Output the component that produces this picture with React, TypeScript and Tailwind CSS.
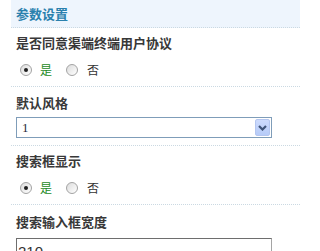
import React from "react";

function Radio({ checked }: { checked?: boolean }) {
  return (
    <span className="relative inline-flex w-[12px] h-[12px] rounded-full border border-[#a3a3a3] bg-gradient-to-br from-[#dcdcdc] to-[#ffffff] items-center justify-center shrink-0">
      {checked && <span className="w-[4px] h-[4px] rounded-full bg-[#1e1e1e]" />}
    </span>
  );
}

function RadioRow() {
  return (
    <div className="mt-[7px] h-[20px] flex items-center pl-[4px] text-[12px] leading-none">
      <Radio checked />
      <span className="ml-[8px] text-[#1d8a1d]">是</span>
      <span className="ml-[14px]">
        <Radio />
      </span>
      <span className="ml-[9px] text-[#333333]">否</span>
    </div>
  );
}

export default function App() {
  return (
    <div className="w-[300px] h-[251px] overflow-hidden bg-white pl-[11px] font-['Noto_Sans_CJK_SC',sans-serif]">
      <div className="h-[28px] bg-[#eef5fd] border-b border-dotted border-[#cbd9e2] pl-[5px] pb-[1px] flex items-center text-[13px] font-bold text-[#2a80ad] leading-none">
        参数设置
      </div>

      <div className="pt-[5px] pb-[6px] pl-[5px] border-b border-dotted border-[#cbd9e2]">
        <div className="h-[20px] leading-[20px] text-[13px] font-bold text-[#383838]">是否同意渠端终端用户协议</div>
        <RadioRow />
      </div>

      <div className="pt-[6px] pb-[7px] pl-[5px] border-b border-dotted border-[#cbd9e2]">
        <div className="h-[20px] leading-[20px] text-[13px] font-bold text-[#383838]">默认风格</div>
        <div className="mt-[4px] w-[256px] h-[21px] border border-[#7f9db9] bg-white flex items-center justify-between pl-[5px] pr-[1px]">
          <span className="text-[13px] leading-none text-[#2a2a3a] font-['Liberation_Serif',serif]">1</span>
          <span className="w-[15px] h-[17px] rounded-[2px] border border-[#b4c6f0] bg-gradient-to-b from-[#cddbfd] to-[#b6cbf8] flex items-center justify-center">
            <svg width="9" height="6" viewBox="0 0 9 6">
              <polyline points="1,1 4.5,4.5 8,1" fill="none" stroke="#3f5479" strokeWidth="2.2" />
            </svg>
          </span>
        </div>
      </div>

      <div className="pt-[5px] pb-[6px] pl-[5px] border-b border-dotted border-[#cbd9e2]">
        <div className="h-[20px] leading-[20px] text-[13px] font-bold text-[#383838]">搜索框显示</div>
        <RadioRow />
      </div>

      <div className="pt-[7px] pl-[5px]">
        <div className="h-[20px] leading-[20px] text-[13px] font-bold text-[#383838]">搜索输入框宽度</div>
        <div className="mt-[6px] w-[256px] h-[24px] border border-[#a5a5a5] border-t-[#6e6e6e] border-l-[#6e6e6e] bg-white pl-[1px] pt-[4px] text-[15px] leading-[18px] text-[#333333] font-['Liberation_Sans',sans-serif]">
          210
        </div>
      </div>
    </div>
  );
}
